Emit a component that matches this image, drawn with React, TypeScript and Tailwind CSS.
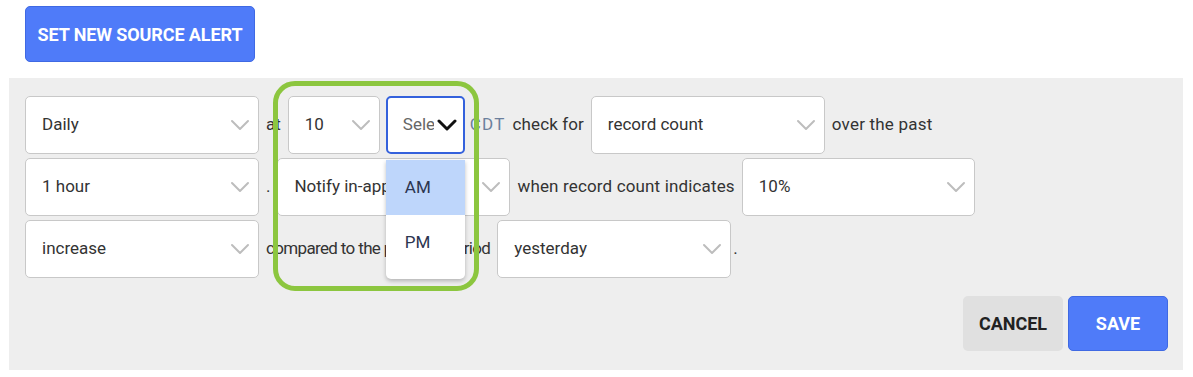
import React from "react";

const font = { fontFamily: "Roboto, 'Liberation Sans', sans-serif" };

function Chevron({ dark = false }: { dark?: boolean }) {
  return (
    <svg
      width="20"
      height="12"
      viewBox="0 0 20 12"
      className="shrink-0"
      fill="none"
      stroke={dark ? "#111111" : "#bdbdbd"}
      strokeWidth={dark ? 3 : 2}
      strokeLinecap="round"
      strokeLinejoin="round"
    >
      <polyline points="2,2 10,10 18,2" />
    </svg>
  );
}

function Select({ value, width }: { value: string; width: string }) {
  return (
    <div
      className={`${width} h-[58px] shrink-0 flex items-center justify-between bg-white border border-[#c8c8c8] rounded-[5px] pl-[16px] pr-[8px] overflow-hidden`}
    >
      <span className="text-[17px] text-[#333] whitespace-nowrap">{value}</span>
      <Chevron />
    </div>
  );
}

function Text({ children, className = "text-[17px]" }: { children: React.ReactNode; className?: string }) {
  return <span className={`text-[#333] whitespace-nowrap ${className}`}>{children}</span>;
}

export default function App() {
  return (
    <div className="relative w-[1193px] h-[377px] bg-white overflow-hidden" style={font}>
      <div className="pt-[6px] pl-[25px]">
        <button className="w-[230px] h-[56px] bg-[#4f7bf9] border border-[#3f69e3] rounded-[5px] text-white font-bold text-[18px] tracking-[-0.1px]">
          SET NEW SOURCE ALERT
        </button>
      </div>

      {/* Alert form */}
      <div className="mt-[16px] ml-[9px] w-[1174px] h-[292px] bg-[#eeeeee] pt-[18px] pl-[16px] pr-[15px]">
        <div className="flex flex-col gap-[4px]">
          <div className="flex items-center gap-[7px]">
            <Select value="Daily" width="w-[234px]" />
            <Text>at</Text>
            <Select value="10" width="w-[92px]" />
            <div className="relative -ml-[1px]">
              <div className="w-[79px] h-[58px] flex items-center justify-between bg-white border-2 border-[#3461dc] rounded-[5px] pl-[15px] pr-[6px] overflow-hidden">
                <span className="text-[17px] text-[#666] whitespace-nowrap overflow-hidden w-[31px]">Select</span>
                <Chevron dark />
              </div>
              <div className="absolute left-0 top-[64px] z-10 w-[79px] h-[119px] bg-white rounded-b-[5px] shadow-[0_2px_4px_rgba(0,0,0,0.25)] overflow-hidden">
                <div className="h-[55px] bg-[#bed6fb] flex items-center pl-[19px] text-[17px] text-[#2c3550]">AM</div>
                <div className="h-[55px] flex items-center pl-[19px] text-[17px] text-[#2c3550]">PM</div>
              </div>
            </div>
            <span className="text-[17px] text-[#6b7f9c] whitespace-nowrap -ml-[2px] tracking-[1.2px]">CDT</span>
            <Text className="text-[17px] tracking-[0.1px]">check for</Text>
            <Select value="record count" width="w-[234px]" />
            <Text className="text-[17px] tracking-[0.2px]">over the past</Text>
          </div>

          <div className="flex items-center gap-[7px]">
            <Select value="1 hour" width="w-[234px]" />
            <Text>.</Text>
            <Select value="Notify in-app" width="w-[233px]" />
            <Text className="text-[17px] tracking-[0.15px]">when record count indicates</Text>
            <Select value="10%" width="w-[233px]" />
          </div>

          <div className="flex items-center gap-[7px]">
            <Select value="increase" width="w-[234px]" />
            <Text className="text-[17px] tracking-[-0.65px]">compared to the previous period</Text>
            <Select value="yesterday" width="w-[234px]" />
            <span className="text-[17px] text-[#333] -ml-[5px]">.</span>
          </div>
        </div>

        <div className="flex justify-end gap-[5px] mt-[18px]">
          <button className="w-[100px] h-[55px] bg-[#e0e0e0] rounded-[5px] text-[#222] font-bold text-[18px]">
            CANCEL
          </button>
          <button className="w-[100px] h-[55px] bg-[#4f7bf9] border border-[#3f69e3] rounded-[5px] text-white font-bold text-[18px]">
            SAVE
          </button>
        </div>
      </div>

      {/* highlight annotation */}
      <div className="absolute left-[273px] top-[81px] w-[206px] h-[210px] border-[5px] border-[#8cc63f] rounded-[22px] z-20 pointer-events-none" />
    </div>
  );
}
